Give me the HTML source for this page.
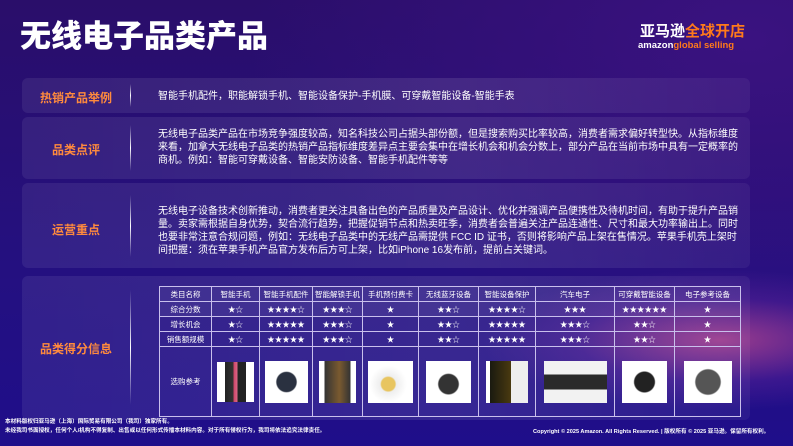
<!DOCTYPE html>
<html><head><meta charset="utf-8"><style>
*{margin:0;padding:0;box-sizing:border-box}
body{width:793px;height:446px;overflow:hidden;font-family:"Liberation Sans","Noto Sans CJK SC",sans-serif;color:#fff;
background:radial-gradient(ellipse 240px 70px at 720px 340px,rgba(235,90,150,.6),rgba(140,50,170,.25) 60%,transparent 100%),
radial-gradient(ellipse 500px 300px at 750px 40px,#3a1280,transparent),
linear-gradient(180deg,#2a0e6a 0%,#241080 60%,#1f0e8a 100%);position:relative}
h1{position:absolute;left:20px;top:11px;font-size:31px;font-weight:900}
.logo{position:absolute;left:640px;top:20px;font-size:15px;font-weight:bold}
.logo .o{color:#ff7a1a}
.logo2{position:absolute;left:638px;top:40px;font-size:9.5px;font-weight:bold}
.panel{position:absolute;left:22px;width:728px;border-radius:6px;background:linear-gradient(90deg,rgba(255,255,255,.07),rgba(255,255,255,.10) 60%,rgba(255,255,255,.05))}
.lab{position:absolute;left:0;width:108px;text-align:center;color:#ff8a3d;font-weight:bold;font-size:12px}
.div{position:absolute;left:108px;width:1px;background:linear-gradient(180deg,transparent,#fff 50%,transparent)}
.txt{position:absolute;left:136px;width:582px;font-size:10px;line-height:13px}
table{position:absolute;left:137px;top:10px;border-collapse:collapse;font-size:7.5px}
td{border:1px solid #c9c0ec;text-align:center;height:15px;padding:0}
tr.h td{background:rgba(255,255,255,.06)}
.img{display:inline-block;background:#fff;vertical-align:middle}
.foot{position:absolute;font-size:5.6px;font-weight:bold;line-height:9px}
</style></head><body>
<h1>无线电子品类产品</h1>
<div class="logo">亚马逊<span class="o">全球开店</span></div>
<div class="logo2">amazon<span style="color:#ff7a1a">global selling</span></div>

<div class="panel" style="top:78px;height:35px">
<div class="lab" style="top:11px">热销产品举例</div>
<div class="div" style="top:6px;height:23px"></div>
<div class="txt" style="top:12px">智能手机配件，职能解锁手机、智能设备保护-手机膜、可穿戴智能设备-智能手表</div>
</div>

<div class="panel" style="top:117px;height:62px">
<div class="lab" style="top:24px">品类点评</div>
<div class="div" style="top:8px;height:46px"></div>
<div class="txt" style="top:11px">无线电子品类产品在市场竞争强度较高，知名科技公司占据头部份额，但是搜索购买比率较高，消费者需求偏好转型快。从指标维度来看，加拿大无线电子品类的热销产品指标维度差异点主要会集中在增长机会和机会分数上，部分产品在当前市场中具有一定概率的商机。例如：智能可穿戴设备、智能安防设备、智能手机配件等等</div>
</div>

<div class="panel" style="top:183px;height:85px">
<div class="lab" style="top:38px">运营重点</div>
<div class="div" style="top:12px;height:62px"></div>
<div class="txt" style="top:22px">无线电子设备技术创新推动，消费者更关注具备出色的产品质量及产品设计、优化并强调产品便携性及待机时间，有助于提升产品销量。卖家需根据自身优势，契合流行趋势，把握促销节点和热卖旺季，消费者会普遍关注产品连通性、尺寸和最大功率输出上。同时也要非常注意合规问题，例如：无线电子品类中的无线产品需提供 FCC ID 证书，否则将影响产品上架在售情况。苹果手机壳上架时间把握：须在苹果手机产品官方发布后方可上架，比如iPhone 16发布前，提前占关键词。</div>
</div>

<div class="panel" style="top:276px;height:144px">
<div class="lab" style="top:64px">品类得分信息</div>
<div class="div" style="top:14px;height:115px"></div>
<table>
<tr class="h"><td style="width:52px">类目名称</td><td style="width:48px">智能手机</td><td style="width:53px">智能手机配件</td><td style="width:50px">智能解锁手机</td><td style="width:56px">手机预付费卡</td><td style="width:60px">无线蓝牙设备</td><td style="width:57px">智能设备保护</td><td style="width:79px">汽车电子</td><td style="width:60px">可穿戴智能设备</td><td style="width:66px">电子参考设备</td></tr>
<tr class="h"><td>综合分数</td><td>★☆</td><td>★★★★☆</td><td>★★★☆</td><td>★</td><td>★★☆</td><td>★★★★☆</td><td>★★★</td><td>★★★★★★</td><td>★</td></tr>
<tr><td>增长机会</td><td>★☆</td><td>★★★★★</td><td>★★★☆</td><td>★</td><td>★★☆</td><td>★★★★★</td><td>★★★☆</td><td>★★☆</td><td>★</td></tr>
<tr><td>销售额规模</td><td>★☆</td><td>★★★★★</td><td>★★★☆</td><td>★</td><td>★★☆</td><td>★★★★★</td><td>★★★☆</td><td>★★☆</td><td>★</td></tr>
<tr><td style="height:70px">选购参考</td>
<td><span class="img" style="width:37px;height:40px;background:linear-gradient(90deg,#fff 22%,#222 22%,#333 45%,#c46 45%,#d68 55%,#222 55%,#222 78%,#fff 78%)"></span></td>
<td><span class="img" style="width:43px;height:42px;background:radial-gradient(circle at 50% 50%,#2a3140 32%,#fff 36%)"></span></td>
<td><span class="img" style="width:37px;height:42px;background:linear-gradient(90deg,#fff 15%,#333 15%,#7a5a30 55%,#333 85%,#fff 85%)"></span></td>
<td><span class="img" style="width:45px;height:42px;background:radial-gradient(circle at 45% 55%,#e8c560 20%,#eee 24%,#fff 55%)"></span></td>
<td><span class="img" style="width:45px;height:42px;background:radial-gradient(circle at 50% 55%,#333 30%,#fff 34%)"></span></td>
<td><span class="img" style="width:42px;height:42px;background:linear-gradient(90deg,#fff 10%,#1a1a10 10%,#4a3a10 60%,#eee 60%)"></span></td>
<td><span class="img" style="width:63px;height:42px;background:linear-gradient(180deg,#f2f2f2 32%,#2a2a2a 32%,#2a2a2a 68%,#f2f2f2 68%)"></span></td>
<td><span class="img" style="width:45px;height:42px;background:radial-gradient(circle,#222 32%,#fff 36%)"></span></td>
<td><span class="img" style="width:48px;height:42px;background:radial-gradient(circle,#555 38%,#fff 42%)"></span></td>
</tr>
</table>
</div>

<div class="foot" style="left:5px;top:418px">本材料版权归亚马逊（上海）国际贸易有限公司（我司）独家所有。<br>未经我司书面授权，任何个人/机构不得复制、出售或以任何形式传播本材料内容。对于所有侵权行为，我司将依法追究法律责任。</div>
<div class="foot" style="left:533px;top:428px">Copyright © 2025 Amazon. All Rights Reserved. | 版权所有 © 2025 亚马逊。保留所有权利。</div>
</body></html>
